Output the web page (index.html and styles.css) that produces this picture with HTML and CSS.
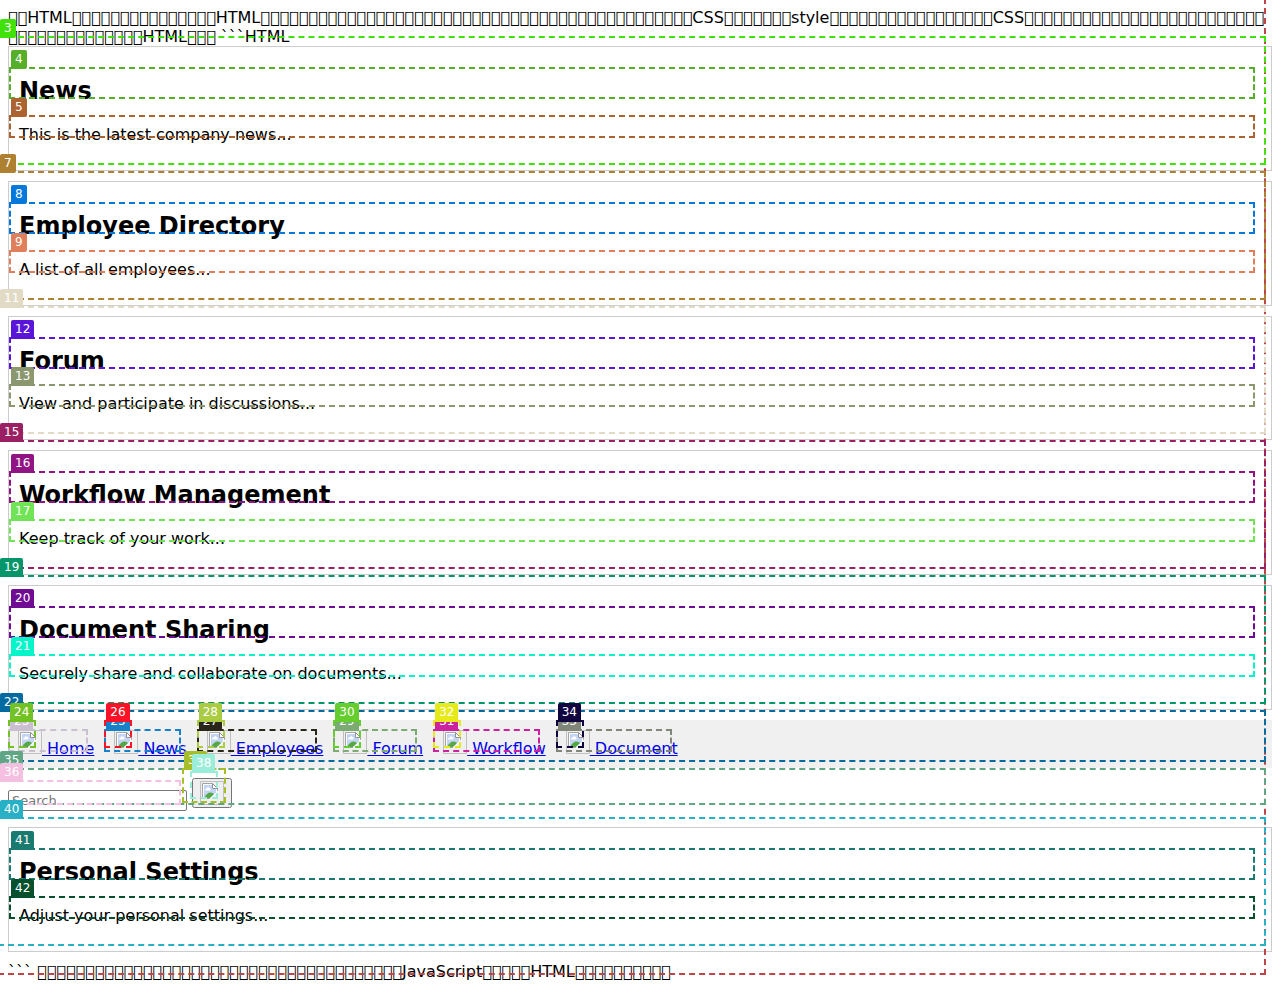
FILE: index.html
```html
<!DOCTYPE html>
<html lang="ja">
<head>
<meta charset="utf-8">
<title>Company Portal</title>
<link rel="stylesheet" href="styles.css">
</head>
<body>
<svg class="defs" width="0" height="0" aria-hidden="true">
  <symbol id="missing" viewBox="0 0 24 24">
    <path d="M.5 .5H23.5V23.5H.5Z" fill="none" stroke="#c0c0c0"/>
    <path d="M2.500 2.500H12.500L17.500 7.500V17.500H2.500Z" fill="#fff" stroke="#a4a4a4"/>
    <path d="M4 4H12V8H16V16H4Z" fill="#c3d4f5"/>
    <path d="M5 9.500Q5 7.500 6.500 7.500Q7.500 5.500 9 6.500Q11 7 10.500 9.500Z" fill="#fff"/>
    <path d="M4 17Q7 11.500 10.500 11.500Q13 11.500 14 13L10 17Z" fill="#53a842"/>
    <path d="M9 18.500L18.500 9V11L11 18.500Z" fill="#fff"/>
    <path d="M12 18L18 12V18Z" fill="#f6f6f6"/>
    <path d="M12.500 2.500V7.500H17.500Z" fill="#fff" stroke="#929292"/>
  </symbol>
</svg>
<span class="mark c2"></span>
<div class="copy">&#xE000;&#xE000;HTML&#xE000;&#xE000;&#xE000;&#xE000;&#xE000;&#xE000;&#xE000;&#xE000;&#xE000;&#xE000;&#xE000;&#xE000;&#xE000;&#xE000;&#xE000;HTML&#xE000;&#xE000;&#xE000;&#xE000;&#xE000;&#xE000;&#xE000;&#xE000;&#xE000;&#xE000;&#xE000;&#xE000;&#xE000;&#xE000;&#xE000;&#xE000;&#xE000;&#xE000;&#xE000;&#xE000;&#xE000;&#xE000;&#xE000;&#xE000;&#xE000;&#xE000;&#xE000;&#xE000;&#xE000;&#xE000;&#xE000;&#xE000;&#xE000;&#xE000;&#xE000;&#xE000;&#xE000;&#xE000;&#xE000;&#xE000;&#xE000;&#xE000;&#xE000;&#xE000;&#xE000;CSS&#xE000;&#xE000;&#xE000;&#xE000;&#xE000;&#xE000;&#xE000;style&#xE000;&#xE000;&#xE000;&#xE000;&#xE000;&#xE000;&#xE000;&#xE000;&#xE000;&#xE000;&#xE000;&#xE000;&#xE000;&#xE000;&#xE000;&#xE000;&#xE000;CSS&#xE000;&#xE000;&#xE000;&#xE000;&#xE000;&#xE000;&#xE000;&#xE000;&#xE000;&#xE000;&#xE000;&#xE000;&#xE000;&#xE000;&#xE000;&#xE000;&#xE000;&#xE000;&#xE000;&#xE000;&#xE000;&#xE000;&#xE000;&#xE000;&#xE000;&#xE000;&#xE000;&#xE000;&#xE000;&#xE000;&#xE000;&#xE000;&#xE000;&#xE000;&#xE000;&#xE000;&#xE000;&#xE000;&#xE000;HTML&#xE000;&#xE000;&#xE000; ```HTML</div>

<section class="panel"><span class="mark c3"><b>3</b></span>
  <h2><span class="mark c4"><b>4</b></span>News</h2>
  <p><span class="mark c5"><b>5</b></span>This is the latest company news...</p>
</section>
<section class="panel"><span class="mark c7"><b>7</b></span>
  <h2><span class="mark c8"><b>8</b></span>Employee Directory</h2>
  <p><span class="mark c9"><b>9</b></span>A list of all employees...</p>
</section>
<section class="panel"><span class="mark c11"><b>11</b></span>
  <h2><span class="mark c12"><b>12</b></span>Forum</h2>
  <p><span class="mark c13"><b>13</b></span>View and participate in discussions...</p>
</section>
<section class="panel"><span class="mark c15"><b>15</b></span>
  <h2><span class="mark c16"><b>16</b></span>Workflow Management</h2>
  <p><span class="mark c17"><b>17</b></span>Keep track of your work...</p>
</section>
<section class="panel"><span class="mark c19"><b>19</b></span>
  <h2><span class="mark c20"><b>20</b></span>Document Sharing</h2>
  <p><span class="mark c21"><b>21</b></span>Securely share and collaborate on documents...</p>
</section>

<nav class="nav"><span class="mark c22"><b>22</b></span>
  <div><a href="#home"><span class="mark c23"><b>23</b></span><span class="pic"><svg><use href="#missing"/></svg><span class="mark c24"><b>24</b></span></span> Home</a></div>
  <div><a href="#news"><span class="mark c25"><b>25</b></span><span class="pic"><svg><use href="#missing"/></svg><span class="mark c26"><b>26</b></span></span> News</a></div>
  <div><a href="#employees"><span class="mark c27"><b>27</b></span><span class="pic"><svg><use href="#missing"/></svg><span class="mark c28"><b>28</b></span></span> Employees</a></div>
  <div><a href="#forum"><span class="mark c29"><b>29</b></span><span class="pic"><svg><use href="#missing"/></svg><span class="mark c30"><b>30</b></span></span> Forum</a></div>
  <div><a href="#workflow"><span class="mark c31"><b>31</b></span><span class="pic"><svg><use href="#missing"/></svg><span class="mark c32"><b>32</b></span></span> Workflow</a></div>
  <div><a href="#document"><span class="mark c33"><b>33</b></span><span class="pic"><svg><use href="#missing"/></svg><span class="mark c34"><b>34</b></span></span> Document</a></div>
</nav>

<div class="search"><span class="mark c35"><b>35</b></span>
  <span class="field"><input type="text" placeholder="Search" aria-label="Search"><span class="mark c36"><b>36</b></span></span>
  <span class="field"><span class="mark c37"><b>37</b></span><button type="button" aria-label="Search"><span class="pic"><svg><use href="#missing"/></svg><span class="mark c38"><b>38</b></span></span></button></span>
</div>

<section class="panel"><span class="mark c40"><b>40</b></span>
  <h2><span class="mark c41"><b>41</b></span>Personal Settings</h2>
  <p><span class="mark c42"><b>42</b></span>Adjust your personal settings...</p>
</section>
<div class="copy">``` &#xE000;&#xE000;&#xE000;&#xE000;&#xE000;&#xE000;&#xE000;&#xE000;&#xE000;&#xE000;&#xE000;&#xE000;&#xE000;&#xE000;&#xE000;&#xE000;&#xE000;&#xE000;&#xE000;&#xE000;&#xE000;&#xE000;&#xE000;&#xE000;&#xE000;&#xE000;&#xE000;&#xE000;&#xE000;&#xE000;&#xE000;&#xE000;&#xE000;&#xE000;&#xE000;&#xE000;&#xE000;&#xE000;JavaScript&#xE000;&#xE000;&#xE000;&#xE000;&#xE000;HTML&#xE000;&#xE000;&#xE000;&#xE000;&#xE000;&#xE000;&#xE000;&#xE000;&#xE000;&#xE000;</div>
</body>
</html>
```
FILE: styles.css
```css
body {
  position: relative;
  margin: 0;
  padding: 8px;
  font-family: "DejaVu Sans", sans-serif;
  font-size: 16px;
  color: #000;
  background: #fff;
}
.defs { position: absolute; }
.copy { line-break: anywhere; }

.panel {
  position: relative;
  padding: 10px;
  margin-bottom: 10px;
  border: 1px solid #ccc;
}
.panel h2, .panel p { position: relative; }

.nav {
  position: relative;
  display: flex;
  flex-wrap: wrap;
  gap: 20px;
  padding: 10px;
  background: #f0f0f0;
}
.nav a { position: relative; color: #00e; }

.pic {
  position: relative;
  display: inline-block;
  width: 24px;
  height: 24px;
  text-align: left;
}
.pic svg { display: block; width: 24px; height: 24px; }

.search { position: relative; margin: 10px 0 16px; }
.field { position: relative; display: inline-block; }
.search input {
  box-sizing: border-box;
  width: 179px;
  height: 21px;
  padding: 2px 3px;
  border: 1px solid #767676;
  border-radius: 2px;
  font: 13px "DejaVu Sans", sans-serif;
}
.search button { padding: 1px 6px; line-height: 0; }

/* Numbered dashed frames drawn over each element */
.mark {
  position: absolute;
  z-index: 1;
  inset: -10px 6px 6px -10px;
  border: 2px dashed var(--c);
  pointer-events: none;
}
body > .mark { inset: -2px 14px 14px -2px; }
.panel > .mark { inset: -11px 5px 5px -11px; }
.mark b {
  position: absolute;
  left: 0;
  top: -19px;
  padding: 2px 4px;
  border-radius: 2px;
  background: var(--c);
  color: #fff;
  font: 12px/15px "DejaVu Sans", sans-serif;
}

.c2 { --c: #be4548; }
.c3 { --c: #41e209; }
.c4 { --c: #57ae28; }
.c5 { --c: #ad6330; }
.c7 { --c: #ae8130; }
.c8 { --c: #0479db; }
.c9 { --c: #e07f5c; }
.c11 { --c: #e1dbc5; }
.c12 { --c: #5a16d8; }
.c13 { --c: #8a976f; }
.c15 { --c: #9b2063; }
.c16 { --c: #911484; }
.c17 { --c: #70e356; }
.c19 { --c: #04966a; }
.c20 { --c: #700c93; }
.c21 { --c: #05f5cb; }
.c22 { --c: #046ba0; }
.c23 { --c: #c9bfd0; }
.c24 { --c: #73c224; }
.c25 { --c: #1880c8; }
.c26 { --c: #fb1226; }
.c27 { --c: #2a271a; }
.c28 { --c: #aacb42; }
.c29 { --c: #7bab72; }
.c30 { --c: #65cd2e; }
.c31 { --c: #ce21a0; }
.c32 { --c: #e6ea18; }
.c33 { --c: #808678; }
.c34 { --c: #11053f; }
.c35 { --c: #5fa685; }
.c36 { --c: #f4bfe1; }
.c37 { --c: #a6bf29; }
.c38 { --c: #9aedd8; }
.c40 { --c: #28b1c6; }
.c41 { --c: #1a7a70; }
.c42 { --c: #06502e; }
```
